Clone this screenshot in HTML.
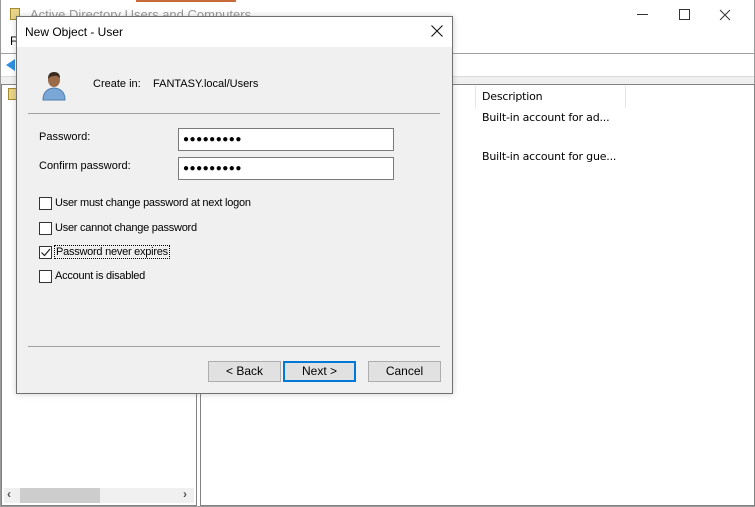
<!DOCTYPE html>
<html><head><style>
*{margin:0;padding:0;box-sizing:border-box}
body{width:755px;height:507px;position:relative;overflow:hidden;background:#fff;font-family:"Liberation Sans",sans-serif;font-size:12px;color:#000}
.a{position:absolute}
.cb{position:absolute;left:39px;width:13px;height:13px;border:1px solid #333;background:#fff}
.lbl{position:absolute;left:55px;font-size:11px;letter-spacing:-0.25px}
.btn{position:absolute;top:361px;width:73px;height:21px;background:#e1e1e1;border:1px solid #adadad;text-align:center;line-height:19px;font-size:12px}
.pw{position:absolute;left:178px;width:216px;height:23px;border:1px solid #7a7a7a;background:#fff;font-size:10px;letter-spacing:0.5px;padding-left:4px;line-height:21px}
.d{position:absolute;font-family:'DejaVu Sans',sans-serif;font-size:11px;letter-spacing:-0.2px}
</style></head><body>
<div class="a" style="left:0;top:0;width:755px;height:507px;border:1px solid #9a9a9a;border-top:none"></div>
<div class="a" style="left:136px;top:0;width:100px;height:2px;background:#c96a3b"></div>
<div class="a" style="left:10px;top:8px;width:10px;height:12px;background:#e8d58a;border:1px solid #a58b2c"></div>
<div class="a" style="left:30px;top:7px;color:#9a9a9a;font-size:13px">Active Directory Users and Computers</div>
<div class="a" style="left:637px;top:14px;width:11px;height:1px;background:#333"></div>
<div class="a" style="left:679px;top:9px;width:11px;height:11px;border:1px solid #333"></div>
<svg class="a" style="left:719px;top:9px" width="12" height="12"><path d="M1 1L11 11M11 1L1 11" stroke="#333" stroke-width="1"/></svg>
<div class="a" style="left:10px;top:34px;font-size:12px">F</div>
<div class="a" style="left:1px;top:53px;width:753px;height:1px;background:#a0a0a0"></div>
<div class="a" style="left:6px;top:59px;width:0;height:0;border-top:6px solid transparent;border-bottom:6px solid transparent;border-right:9px solid #2f8fe0"></div>
<div class="a" style="left:1px;top:76px;width:753px;height:8px;background:#f0f0f0;border-top:1px solid #dcdcdc"></div>
<div class="a" style="left:1px;top:84px;width:196px;height:422px;border:1px solid #828282;background:#fff"></div>
<div class="a" style="left:8px;top:88px;width:10px;height:12px;background:#e8d58a;border:1px solid #a58b2c"></div>
<div class="a" style="left:4px;top:488px;width:190px;height:15px;background:#f0f0f0"></div>
<div class="a" style="left:20px;top:488px;width:80px;height:15px;background:#cdcdcd"></div>
<div class="a" style="left:7px;top:487px;color:#555;font-weight:bold">‹</div>
<div class="a" style="left:183px;top:487px;color:#555;font-weight:bold">›</div>
<div class="a" style="left:200px;top:84px;width:555px;height:422px;border:1px solid #828282;background:#fff"></div>
<div class="a" style="left:475px;top:86px;width:1px;height:22px;background:#e5e5e5"></div>
<div class="a" style="left:625px;top:86px;width:1px;height:22px;background:#e5e5e5"></div>
<div class="d" style="left:482px;top:90px">Description</div>
<div class="d" style="left:482px;top:111px">Built-in account for ad...</div>
<div class="d" style="left:482px;top:150px">Built-in account for gue...</div>
<div class="a" style="left:16px;top:16px;width:437px;height:378px;background:#f0f0f0;border:1px solid #707070;box-shadow:0 0 6px rgba(0,0,0,.2)"></div>
<div class="a" style="left:17px;top:17px;width:435px;height:30px;background:#fff"></div>
<div class="a" style="left:25px;top:25px;font-size:12px">New Object - User</div>
<svg class="a" style="left:431px;top:25px" width="12" height="12"><path d="M0.5 0.5L11.5 11.5M11.5 0.5L0.5 11.5" stroke="#111" stroke-width="1.1"/></svg>
<svg class="a" style="left:40px;top:68px" width="28" height="34" viewBox="0 0 28 34">
<path d="M3 32 Q3 21 14 20 Q25 21 25 32 Z" fill="#7aa7d6" stroke="#4d7fb0"/>
<ellipse cx="14" cy="12" rx="6" ry="7" fill="#9b6a48"/>
<path d="M8 11 Q8 4 14 4 Q20 4 20 10 Q17 7 14 8 Q10 8 8 11Z" fill="#3a2a20"/>
</svg>
<div class="a" style="left:93px;top:78px;font-size:11px">Create in:</div>
<div class="a" style="left:153px;top:78px;font-size:11px">FANTASY.local/Users</div>
<div class="a" style="left:28px;top:113px;width:412px;height:1px;background:#a0a0a0"></div>
<div class="a" style="left:39px;top:131px;font-size:11px">Password:</div>
<div class="a" style="left:39px;top:160px;font-size:11px">Confirm password:</div>
<div class="pw" style="top:128px">●●●●●●●●●</div>
<div class="pw" style="top:157px">●●●●●●●●●</div>
<div class="cb" style="top:197px"></div><div class="lbl" style="top:197px">User must change password at next logon</div>
<div class="cb" style="top:222px"></div><div class="lbl" style="top:222px">User cannot change password</div>
<div class="cb" style="top:246px"><svg width="11" height="11" style="position:absolute;left:0;top:0"><path d="M1.5 5.5 L4.5 8.5 L10 2" fill="none" stroke="#222" stroke-width="1.2"/></svg></div><div class="lbl" style="top:245px;left:54px;border:1px dotted #000;padding:0 1px">Password never expires</div>
<div class="cb" style="top:270px"></div><div class="lbl" style="top:270px">Account is disabled</div>
<div class="a" style="left:28px;top:346px;width:412px;height:1px;background:#a0a0a0"></div>
<div class="btn" style="left:208px">&lt; Back</div>
<div class="btn" style="left:283px;border:2px solid #0078d7;line-height:17px">Next &gt;</div>
<div class="btn" style="left:368px">Cancel</div>
</body></html>
